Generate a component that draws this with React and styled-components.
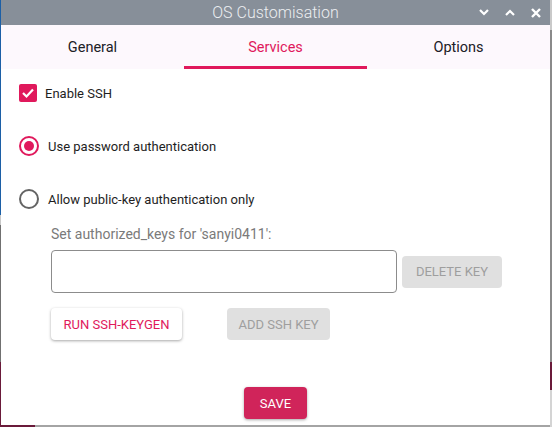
import React from 'react';
import styled, { createGlobalStyle } from 'styled-components';

const PINK = '#e0195c';

const GlobalStyle = createGlobalStyle`
  html, body {
    margin: 0;
    height: 100%;
  }
  body {
    font-family: Roboto, "Liberation Sans", sans-serif;
    background:
      linear-gradient(to bottom, #1c5fa6 0 215px, #c8c8c8 215px 225px, #707070 225px 362px, #6a1a3a 362px) left top / 1px 100% no-repeat,
      linear-gradient(to bottom, #c9c9c9 0 30px, #8a8a8a 30px 362px, #6a1a3a 362px 390px, #d4d4d4 390px) right top / 2px 100% no-repeat,
      linear-gradient(to right, #6a1a3a 0 35px, #a4a4a4 35px) left bottom / 100% 2px no-repeat,
      #fff;
  }
  #root {
    padding-left: 1px;
  }
`;

const Window = styled.div`
  width: 549px;
  height: 424px;
  background: #fff;
  display: flex;
  flex-direction: column;
`;

const TitleBar = styled.div`
  position: relative;
  height: 25px;
  background: #878f99;
  display: flex;
  align-items: center;
  justify-content: center;
  color: #eceef1;
  font-size: 16px;
  font-weight: 300;
`;

const WinControls = styled.div`
  position: absolute;
  right: 9px;
  top: 0;
  height: 25px;
  display: flex;
  align-items: center;
  gap: 16px;
`;

const TabBar = styled.div`
  height: 44px;
  background: #fdf8fd;
  display: grid;
  grid-template-columns: repeat(3, 1fr);
`;

const Tab = styled.div`
  display: flex;
  align-items: center;
  justify-content: center;
  font-size: 14.5px;
  font-weight: 400;
  color: ${(p) => (p.active ? PINK : '#202026')};
  border-bottom: 3px solid ${(p) => (p.active ? PINK : 'transparent')};
  padding-top: 3px;
`;

const Content = styled.div`
  flex: 1;
  display: flex;
  flex-direction: column;
  padding: 4px 0 5px 18px;
`;

const OptionRow = styled.label`
  height: 40px;
  display: flex;
  align-items: center;
  gap: ${(p) => p.gap}px;
  font-size: 13px;
  color: #1e1e1e;
  & + & {
    margin-top: 13px;
  }
`;

const CheckBox = styled.span`
  width: 18px;
  height: 18px;
  border-radius: 2px;
  background: ${PINK};
  display: flex;
  align-items: center;
  justify-content: center;
`;

const Radio = styled.span`
  width: 20px;
  height: 20px;
  box-sizing: border-box;
  border-radius: 50%;
  border: 2px solid ${(p) => (p.checked ? PINK : '#646464')};
  display: flex;
  align-items: center;
  justify-content: center;
  &::after {
    content: '';
    width: 10px;
    height: 10px;
    border-radius: 50%;
    background: ${(p) => (p.checked ? PINK : 'transparent')};
  }
`;

const KeyBlock = styled.div`
  padding-left: 32px;
  display: flex;
  flex-direction: column;
`;

const FieldLabel = styled.div`
  margin-top: 7px;
  line-height: 16px;
  font-size: 14px;
  color: #7a7a7a;
`;

const KeyRow = styled.div`
  margin-top: 8px;
  display: flex;
  align-items: center;
  gap: 5px;
`;

const KeyInput = styled.div`
  width: 346px;
  height: 43px;
  box-sizing: border-box;
  border: 1px solid #8c8c8c;
  border-radius: 4px;
`;

const Button = styled.button`
  width: ${(p) => p.w}px;
  height: 32px;
  border: none;
  border-radius: 4px;
  font-family: Roboto, "Liberation Sans", sans-serif;
  font-size: 13px;
  text-transform: uppercase;
  padding: 0;
  background: ${(p) => (p.kind === 'primary' ? '#d0245a' : p.kind === 'outline' ? '#fff' : '#e0e0e0')};
  color: ${(p) => (p.kind === 'primary' ? '#fff' : p.kind === 'outline' ? PINK : '#9e9e9e')};
  box-shadow: ${(p) => (p.kind === 'disabled' ? 'none' : '0 1px 3px rgba(0,0,0,0.35)')};
`;

const ButtonRow = styled.div`
  margin-top: 15px;
  display: flex;
  gap: 45px;
`;

const Footer = styled.div`
  margin-top: auto;
  display: flex;
  justify-content: center;
  padding-right: 18px;
`;

const Chevron = ({ up }) => (
  <svg width="10" height="7" viewBox="0 0 10 7">
    <path d={up ? 'M1 6 L5 2 L9 6' : 'M1 1 L5 5 L9 1'} fill="none" stroke="#fff" strokeWidth="2.2" />
  </svg>
);

const Close = () => (
  <svg width="10" height="10" viewBox="0 0 10 10">
    <path d="M1 1 L9 9 M9 1 L1 9" stroke="#fff" strokeWidth="2.4" />
  </svg>
);

export default function App() {
  return (
    <>
      <GlobalStyle />
      <Window>
        <TitleBar>
          OS Customisation
          <WinControls>
            <Chevron />
            <Chevron up />
            <Close />
          </WinControls>
        </TitleBar>
        <TabBar>
          <Tab>General</Tab>
          <Tab active>Services</Tab>
          <Tab>Options</Tab>
        </TabBar>
        <Content>
          <OptionRow gap={8}>
            <CheckBox>
              <svg width="14" height="12" viewBox="0 0 14 12">
                <path d="M2 6 L5.5 9.5 L12 2.5" fill="none" stroke="#fff" strokeWidth="2.2" />
              </svg>
            </CheckBox>
            Enable SSH
          </OptionRow>
          <OptionRow gap={9}>
            <Radio checked />
            Use password authentication
          </OptionRow>
          <OptionRow gap={9}>
            <Radio />
            Allow public-key authentication only
          </OptionRow>
          <KeyBlock>
            <FieldLabel>Set authorized_keys for 'sanyi0411':</FieldLabel>
            <KeyRow>
              <KeyInput />
              <Button kind="disabled" w={100}>Delete key</Button>
            </KeyRow>
            <ButtonRow>
              <Button kind="outline" w={131}>Run ssh-keygen</Button>
              <Button kind="disabled" w={103}>Add ssh key</Button>
            </ButtonRow>
          </KeyBlock>
          <Footer>
            <Button kind="primary" w={63}>Save</Button>
          </Footer>
        </Content>
      </Window>
    </>
  );
}
